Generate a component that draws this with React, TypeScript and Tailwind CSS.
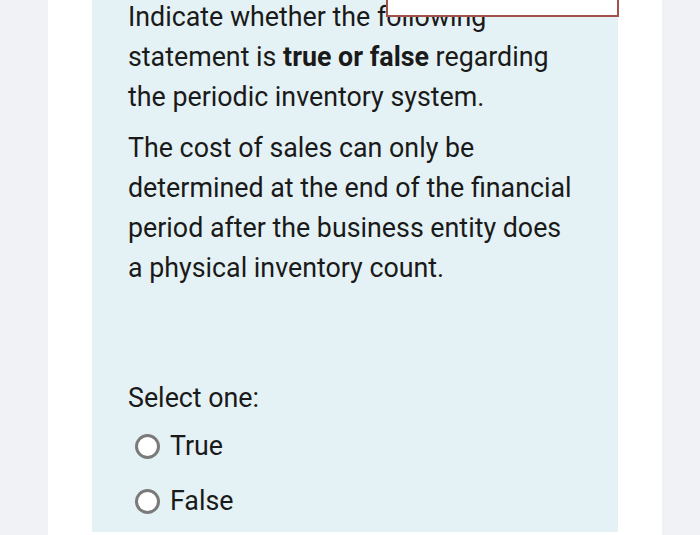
export default function App() {
  return (
    <div className="relative flex h-[535px] w-[700px] overflow-hidden bg-[#f1f2f5] pl-[48px] font-['Roboto',sans-serif] text-[#1a1a1a]">
      <div className="h-full w-[614px] bg-white px-[44px]">
        <div className="flex h-[532px] flex-col bg-[#e5f2f5] pl-[36px] pr-[46px]">
          <div className="-mt-[3px] text-[26.8px] leading-[40px]">
            <p>
              Indicate whether the following statement is <b className="font-bold">true or false</b> regarding the periodic inventory system.
            </p>
            <p className="mt-[11px]">
              The cost of sales can only be determined at the end of the financial period after the business entity does a physical inventory count.
            </p>
          </div>
          <div className="mt-[90px] text-[26.8px] leading-[40px]">Select one:</div>
          <div className="mt-[8px] flex flex-col gap-[15px] pl-[7px]">
            {['True', 'False'].map((opt) => (
              <label key={opt} className="flex h-[40px] items-center gap-[10px] text-[26.8px]">
                <span className="h-[25px] w-[25px] rounded-full border-[3px] border-[#7a7a7a] bg-white" />
                {opt}
              </label>
            ))}
          </div>
        </div>
      </div>
      <div className="absolute left-[386px] top-[-4px] h-[21px] w-[233px] border-[2px] border-[#a5514b] bg-white" />
    </div>
  );
}
